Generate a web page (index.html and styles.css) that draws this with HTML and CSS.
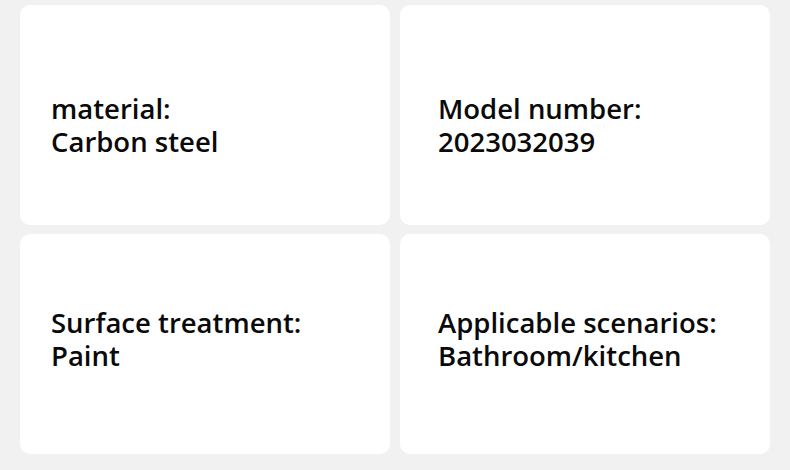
FILE: index.html
```html
<!DOCTYPE html>
<html lang="en">
<head>
<meta charset="utf-8">
<title>Specs</title>
<link rel="stylesheet" href="styles.css">
</head>
<body>
<main class="grid">
  <section class="card card--top card--left">
    <p class="spec">material:<br>Carbon steel</p>
  </section>
  <section class="card card--top card--right">
    <p class="spec">Model number:<br>2023032039</p>
  </section>
  <section class="card card--bottom card--left">
    <p class="spec">Surface treatment:<br>Paint</p>
  </section>
  <section class="card card--bottom card--right">
    <p class="spec">Applicable scenarios:<br>Bathroom/kitchen</p>
  </section>
</main>
</body>
</html>
```
FILE: styles.css
```css
html, body {
  margin: 0;
  padding: 0;
  background: #f1f1f1;
}
body {
  width: 790px;
  height: 470px;
  overflow: hidden;
  font-family: "Open Sans", "Noto Sans", sans-serif;
  color: #0a0a0a;
}
.grid {
  display: grid;
  grid-template-columns: 370px 370px;
  grid-template-rows: 220px 220px;
  column-gap: 10px;
  row-gap: 9px;
  padding: 5px 20px 0 20px;
}
.card {
  background: #ffffff;
  border-radius: 10px;
  box-sizing: border-box;
}
.card--top { padding-top: 87px; }
.card--bottom { padding-top: 72px; }
.card--left { padding-left: 31px; }
.card--right { padding-left: 38px; }
.spec {
  margin: 0;
  font-size: 27.5px;
  font-weight: 600;
  line-height: 33px;
  white-space: nowrap;
}
```
